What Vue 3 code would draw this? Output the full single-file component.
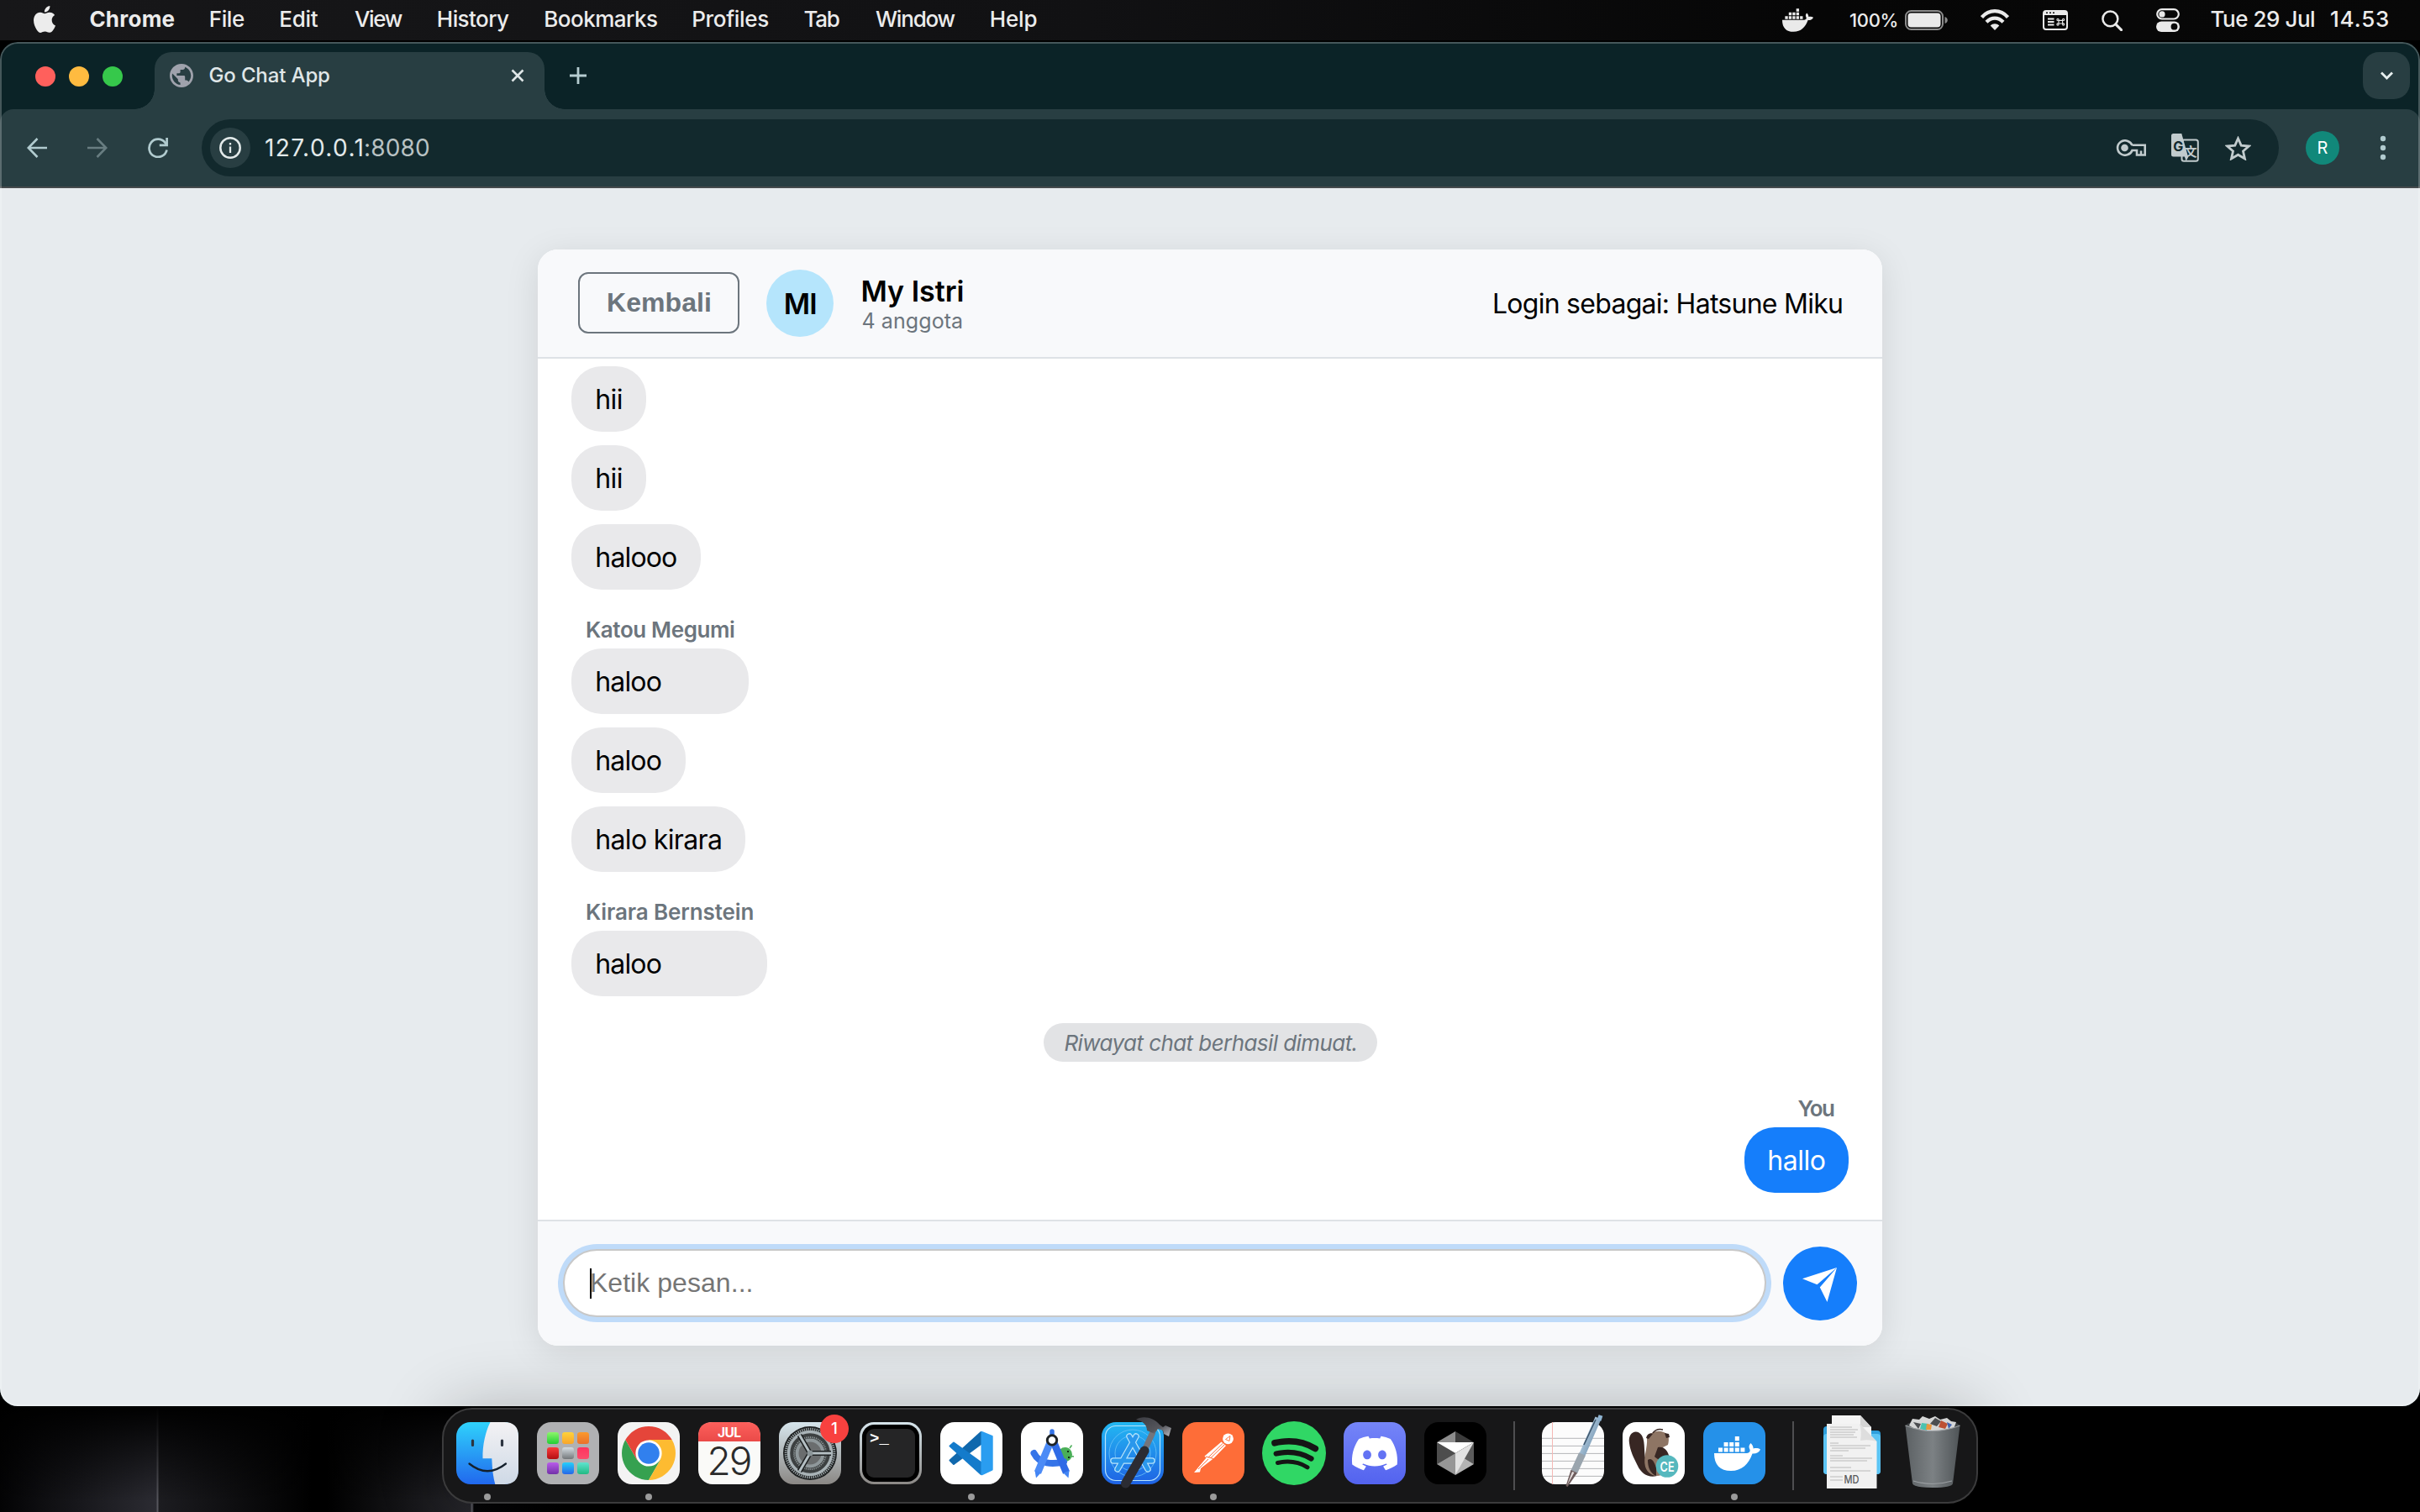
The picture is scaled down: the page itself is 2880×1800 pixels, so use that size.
<script setup>
const menus = [
  { label: 'File', w: 41 },
  { label: 'Edit', w: 45.4 },
  { label: 'View', w: 57.5 },
  { label: 'History', w: 85 },
  { label: 'Bookmarks', w: 133.5 },
  { label: 'Profiles', w: 90 },
  { label: 'Tab', w: 42 },
  { label: 'Window', w: 95.5 },
  { label: 'Help', w: 54.5 },
]

const messages = [
  { text: 'hii', w: 30.2 },
  { text: 'hii', w: 30.2 },
  { text: 'halooo', w: 95.6 },
  { name: 'Katou Megumi', nw: 177, text: 'haloo', w: 77.2 },
  { text: 'haloo', w: 77.2 },
  { text: 'halo kirara', w: 148.4 },
  { name: 'Kirara Bernstein', nw: 199.3, text: 'haloo', w: 77.2 },
]

const tiles = [
  ['#8df56b', '#22cf35'], ['#ffd23a', '#f8a52a'], ['#fb9a2c', '#ea702c'],
  ['#fb3b3b', '#b40f12'], ['#d5dde2', '#73777a'], ['#ff335f', '#fb4d6c'],
  ['#b95cea', '#7231a8'], ['#25d0fb', '#2767e8'], ['#5fe3cf', '#22ba83'],
]

const ctx = document.createElement('canvas').getContext('2d')

// Sizes a label to its visible ink: letter spacing stretches it to the given width.
const vFit = (el, { value }) => {
  const s = getComputedStyle(el)
  ctx.font = `${s.fontStyle} ${s.fontWeight} ${s.fontSize} ${s.fontFamily}`
  const text = el.textContent.trim()
  const m = ctx.measureText(text)
  const ink = m.actualBoundingBoxLeft + m.actualBoundingBoxRight
  el.style.letterSpacing = `${(value - 0.8 - ink) / Math.max(1, text.length - 1)}px`
  el.style.textIndent = `${m.actualBoundingBoxLeft + 0.9}px`
  el.style.width = `${value}px`
}
</script>

<template>
  <div class="desktop">
    <svg width="0" height="0" class="defs">
      <defs>
        <symbol id="whale" viewBox="0 0 55 41">
          <path d="M0 20h39c3-.5 4-2 3.600-4C41 13 41 10.500 43.500 8c2 2 3 4 3.200 6.500 3-.8 6-.5 8.300 1-1.500 3.500-5 5.300-9.500 5C41 33 33 41 20 41 7 41 0 34 0 20z" />
          <path d="M5 13.500h5v5H5zM11.600 13.500h5v5h-5zM18.200 13.500h5v5h-5zM24.800 13.500h5v5h-5zM31.400 13.500h5v5h-5zM11.600 6.900h5v5h-5zM18.200 6.900h5v5h-5zM24.800 6.900h5v5h-5zM24.800 0h5v5.200h-5z" />
        </symbol>
        <linearGradient id="gFinder" x2="0" y2="1"><stop stop-color="#2fd2fb" /><stop offset="1" stop-color="#2168ee" /></linearGradient>
        <linearGradient id="gFace" x2="0" y2="1"><stop stop-color="#f3f2f4" /><stop offset="1" stop-color="#ced9e6" /></linearGradient>
        <linearGradient id="gCal" x2="0" y2="1"><stop stop-color="#fd605c" /><stop offset="1" stop-color="#ea4a48" /></linearGradient>
        <linearGradient id="gSet" x2="0" y2="1"><stop stop-color="#d6e5ec" /><stop offset="1" stop-color="#8b8885" /></linearGradient>
        <linearGradient id="gXc" x2="0" y2="1"><stop stop-color="#22b8f2" /><stop offset="1" stop-color="#1f62e4" /></linearGradient>
        <linearGradient id="gDis" x2="0" y2="1"><stop stop-color="#7585f8" /><stop offset="1" stop-color="#5363ef" /></linearGradient>
        <linearGradient id="gPen" x2="1" y2="1"><stop stop-color="#cfe6f7" /><stop offset="1" stop-color="#5d7f9d" /></linearGradient>
        <linearGradient id="gBin"><stop stop-color="#5c6164" /><stop offset=".5" stop-color="#7c8184" /><stop offset="1" stop-color="#4f5457" /></linearGradient>
        <linearGradient id="gHam" x2="1" y2="1"><stop stop-color="#3b3c42" /><stop offset=".6" stop-color="#55565c" /><stop offset="1" stop-color="#b9bac0" /></linearGradient>
      </defs>
    </svg>

    <header class="menubar">
      <svg class="apple" viewBox="2.200 0 19.600 24"><path d="M12.152 6.896c-.948 0-2.415-1.078-3.960-1.040-2.040.027-3.910 1.183-4.961 3.014-2.117 3.675-.546 9.103 1.519 12.090 1.013 1.454 2.208 3.090 3.792 3.039 1.520-.065 2.090-.987 3.935-.987 1.831 0 2.350.987 3.960.948 1.637-.026 2.676-1.480 3.676-2.948 1.156-1.688 1.636-3.325 1.662-3.415-.039-.013-3.182-1.221-3.220-4.857-.026-3.040 2.480-4.494 2.597-4.559-1.429-2.090-3.623-2.324-4.390-2.376-2-.156-3.675 1.090-4.610 1.090zM15.530 3.830c.843-1.012 1.400-2.427 1.245-3.830-1.207.052-2.662.805-3.532 1.818-.780.896-1.454 2.338-1.273 3.714 1.338.104 2.715-.688 3.559-1.701" /></svg>
      <nav class="menus">
        <b v-fit="101" class="fit app-name">Chrome</b>
        <span v-for="m in menus" :key="m.label" v-fit="m.w" class="fit">{{ m.label }}</span>
      </nav>
      <div class="status">
        <svg class="st-docker"><use href="#whale" /></svg>
        <span v-fit="56.5" class="fit pct">100%</span>
        <svg class="st-batt" viewBox="0 0 51 24"><rect x="1" y="1" width="44" height="22" rx="6.500" fill="none" stroke="#8b8b8b" stroke-width="2" /><rect x="3.500" y="3.500" width="39" height="17" rx="4" /><path d="M47.500 8c2.500 1 3.300 2.500 3.300 4s-.8 3-3.300 4z" fill="#8b8b8b" /></svg>
        <svg class="st-wifi" viewBox="0 0 34 25" fill="none" stroke="#eaeaea" stroke-width="4.200"><path d="M1.500 9.500C10-.3 24-.3 32.500 9.500M7 15.300c6-6.300 14-6.300 20 0" /><path d="M17 25l-5.300-5.600c3.200-3 7.400-3 10.600 0z" fill="#eaeaea" stroke="none" /></svg>
        <svg class="st-win" viewBox="0 0 30 24" fill="none" stroke="#eaeaea" stroke-width="2"><rect x="1" y="1" width="28" height="22" rx="3" /><path d="M1 6h28V3q0-2-2-2H3Q1 1 1 3z" fill="#eaeaea" stroke="none" /><path d="M6 10.500h7.500M6 14h7.500M6 17.500h7.500" stroke-width="1.800" /><path d="M19 12.400h4.600v3.600H19z" stroke-width="1.100" /><circle cx="18" cy="11.400" r="1.100" stroke-width="1.100" /><circle cx="24.600" cy="11.400" r="1.100" stroke-width="1.100" /><circle cx="18" cy="17" r="1.100" stroke-width="1.100" /><circle cx="24.600" cy="17" r="1.100" stroke-width="1.100" /><path d="M4 3.300h2M8 3.300h2M12 3.300h2" stroke="#0b0b0c" stroke-width="1.600" /></svg>
        <svg class="st-search" viewBox="0 0 26 26" fill="none" stroke="#eaeaea" stroke-width="2.600"><circle cx="10.800" cy="10.800" r="9.300" /><path d="M17.500 17.500l7 7" stroke-width="3.200" stroke-linecap="round" /></svg>
        <svg class="st-cc" viewBox="0 0 28 28"><rect x="1.200" y="1.200" width="25.600" height="11.300" rx="5.650" fill="none" stroke="#eaeaea" stroke-width="2.200" /><circle cx="7" cy="6.900" r="3.600" /><rect y="15.500" width="28" height="12.500" rx="6.250" /><circle cx="21.500" cy="21.700" r="3.900" fill="#090909" /></svg>
        <span v-fit="123.500" class="fit date">Tue 29 Jul</span>
        <span v-fit="69" class="fit time">14.53</span>
      </div>
    </header>

    <section class="window">
      <div class="tabstrip">
        <div class="lights"><i class="red" /><i class="yellow" /><i class="green" /></div>
        <div class="tab">
          <svg class="globe" viewBox="2 2 20 20"><path d="M12 2C6.480 2 2 6.480 2 12s4.480 10 10 10 10-4.480 10-10S17.520 2 12 2zm-1 17.930c-3.950-.490-7-3.850-7-7.930 0-.620.080-1.210.210-1.790L9 15v1c0 1.100.900 2 2 2v1.930zm6.900-2.540c-.260-.810-1-1.390-1.900-1.390h-1v-3c0-.550-.450-1-1-1H8v-2h2c.550 0 1-.450 1-1V7h2c1.100 0 2-.900 2-2v-.410c2.930 1.190 5 4.060 5 7.410 0 2.080-.800 3.970-2.100 5.390z" /></svg>
          <span v-fit="143.500" class="fit tab-title">Go Chat App</span>
          <svg class="close" viewBox="0 0 16 16"><path d="M1.500 1.500l13 13M14.500 1.500l-13 13" stroke="#dfe6e7" stroke-width="2.600" /></svg>
        </div>
        <svg class="plus" viewBox="0 0 20 20"><path d="M10 0v20M0 10h20" stroke="#b6cdd1" stroke-width="2.800" /></svg>
        <div class="tabsearch"><svg viewBox="0 0 16 11"><path d="M1.500 1.500L8 8l6.500-6.500" fill="none" stroke="#e6eeee" stroke-width="2.800" /></svg></div>
      </div>

      <div class="toolbar">
        <svg class="nav" viewBox="0 0 24 24"><path d="M12.500 1L1.800 12l10.700 11M2 12h22" fill="none" stroke="#b1cbcf" stroke-width="2.600" /></svg>
        <svg class="nav fwd" viewBox="0 0 24 24"><path d="M11.500 1l10.700 11-10.700 11M22 12H0" fill="none" stroke="#687d81" stroke-width="2.600" /></svg>
        <svg class="nav reload" viewBox="0 0 24 24"><path d="M22.500 14.500A10.600 10.600 0 1 1 20.500 5.800L22.300 8.500" fill="none" stroke="#b1cbcf" stroke-width="2.700" /><path d="M22.600 0v8.800h-8.800" fill="none" stroke="#b1cbcf" stroke-width="2.700" /></svg>
        <div class="omnibox">
          <div class="info"><svg viewBox="0 0 26 26"><circle cx="13" cy="13" r="11.700" fill="none" stroke="#e3eaea" stroke-width="2.500" /><path d="M13 11.500V19M13 7v2.500" stroke="#e3eaea" stroke-width="2.300" /></svg></div>
          <div class="url"><span v-fit="115.500" class="fit">127.0.0.1</span><span v-fit="76" class="fit port">:8080</span></div>
          <svg class="key" viewBox="0 0 36 20" fill="none" stroke="#c1cbcd" stroke-width="2.600"><path d="M19.500 7A9 8.700 0 1 0 19.500 13H25v5.500h9.700V6.800H19.500" /><circle cx="10.500" cy="10" r="4.300" fill="#c1cbcd" stroke="none" /><path d="M30 18v-4.500" /></svg>
          <svg class="translate" viewBox="0 0 33 34"><rect x="12.500" y="7.500" width="19.300" height="25.300" rx="2.500" fill="none" stroke="#c1cbcd" stroke-width="2" /><path d="M2.500 0h9.800l7.700 27.500H2.500Q0 27.500 0 25V2.500Q0 0 2.500 0zM16 27.500h4.500L17.500 33z" fill="#c1cbcd" /><text x="2.300" y="20.500" class="tg">G</text><text x="15.600" y="26.500" class="tz">文</text></svg>
          <svg class="star" viewBox="0 0 31 29"><path d="M15.500 2.800l3.700 8.300 9.100.9-6.800 6 2 8.900-8-4.700-8 4.700 2-8.900-6.800-6 9.100-.9z" fill="none" stroke="#c1cbcd" stroke-width="2.800" /></svg>
        </div>
        <div class="profile">R</div>
        <svg class="dots" viewBox="0 0 8 30" fill="#b1cbcf"><circle cx="4" cy="4" r="3.200" /><circle cx="4" cy="15" r="3.200" /><circle cx="4" cy="26" r="3.200" /></svg>
      </div>

      <main class="page">
        <article class="card">
          <div class="chat-head">
            <button class="back"><span v-fit="121.600" class="fit">Kembali</span></button>
            <div class="avatar"><span v-fit="36.500" class="fit">MI</span></div>
            <div class="titles">
              <span v-fit="120" class="fit title">My Istri</span>
              <span v-fit="119.500" class="fit sub">4 anggota</span>
            </div>
            <span v-fit="415" class="fit login">Login sebagai: Hatsune Miku</span>
          </div>

          <div class="messages">
            <div v-for="(m, i) in messages" :key="i" class="msg">
              <div v-if="m.name" class="name"><span v-fit="m.nw" class="fit">{{ m.name }}</span></div>
              <div class="bubble"><span v-fit="m.w" class="fit">{{ m.text }}</span></div>
            </div>
            <div class="system"><span v-fit="347" class="fit">Riwayat chat berhasil dimuat.</span></div>
            <div class="msg own">
              <div class="name"><span v-fit="44.500" class="fit">You</span></div>
              <div class="bubble"><span v-fit="67.400" class="fit">hallo</span></div>
            </div>
          </div>

          <div class="composer">
            <div class="field"><i class="caret" /><span v-fit="190.500" class="fit">Ketik pesan...</span></div>
            <div class="send"><svg viewBox="0 0 41 41"><path d="M41 0L0 13.300l17.500 7zM41 0L20.800 23.600 29.500 41z" fill="#fff" /></svg></div>
          </div>
        </article>
      </main>
    </section>

    <footer class="dock-area">
      <div class="dock">
        <div class="app run"><svg viewBox="0 0 74 74">
          <rect width="74" height="74" rx="17" fill="url(#gFinder)" />
          <path d="M40.500 0H57q17 0 17 17v40q0 17-17 17H46.300Q43 63 42.300 43.300H31.500C31 27 35 11 40.500 0z" fill="url(#gFace)" />
          <path d="M19.500 22v5.500M54.500 22v5.500" stroke="#2c3440" stroke-width="3.200" stroke-linecap="round" /><path d="M15.500 49.500Q37 67 59 49.500" fill="none" stroke="#14202c" stroke-width="2.300" stroke-linecap="round" />
        </svg></div>

        <div class="app"><svg viewBox="0 0 74 74">
          <rect width="74" height="74" rx="17" fill="#b0b1b3" />
          <template v-for="(t, i) in tiles" :key="i">
            <linearGradient :id="'tile' + i" x2="0" y2="1"><stop :stop-color="t[0]" /><stop offset="1" :stop-color="t[1]" /></linearGradient>
            <rect :x="12 + (i % 3) * 18" :y="12 + Math.floor(i / 3) * 18" width="14" height="14" rx="3.200" :fill="`url(#tile${i})`" />
          </template>
        </svg></div>

        <div class="app run"><svg viewBox="0 0 74 74">
          <rect width="74" height="74" rx="17" fill="#f3f3f3" />
          <path d="M9.300 21A32 32 0 0 0 37 69L50.900 45 37 37 23.100 45z" fill="#36a150" />
          <path d="M64.700 21A32 32 0 0 1 37 69L50.900 45 37 37V21z" fill="#fdbb31" />
          <path d="M9.300 21A32 32 0 0 1 64.700 21H37V37L23.100 45z" fill="#e5453a" />
          <circle cx="37" cy="37" r="15.600" fill="#fff" /><circle cx="37" cy="37" r="12.800" fill="#3180ee" />
        </svg></div>

        <div class="app"><svg viewBox="0 0 74 74">
          <rect width="74" height="74" rx="17" fill="#fafaf8" /><path d="M0 23V17Q0 0 17 0h40q17 0 17 17v6z" fill="url(#gCal)" />
          <text x="23" y="17.700" class="cal-m" textLength="28">JUL</text><text x="10.500" y="62.700" class="cal-d" textLength="54">29</text>
        </svg></div>

        <div class="app"><svg viewBox="0 0 74 74">
          <rect width="74" height="74" rx="17" fill="url(#gSet)" />
          <circle cx="37" cy="37" r="32" fill="#1c1f20" /><circle cx="37" cy="37" r="28.800" fill="none" stroke="#98a1a4" stroke-width="3" stroke-dasharray="1.300 1.210" />
          <circle cx="37" cy="37" r="25.500" fill="#3c4041" stroke="#a9b3b7" stroke-width="3.400" />
          <circle cx="37" cy="37" r="19" fill="none" stroke="#8b9395" stroke-width="2" stroke-dasharray="1.300 1.100" />
          <circle cx="37" cy="37" r="15.500" fill="#6a6d6e" stroke="#8f989b" stroke-width="4" />
          <path d="M37 37h25M37 37L24.500 15.500M37 37L24.500 58.500" stroke="#1c1f20" stroke-width="6" /><path d="M37 37h25M37 37L24.500 15.500M37 37L24.500 58.500" stroke="#b4bfc3" stroke-width="3" /><circle cx="37" cy="37" r="3.500" fill="#8c9699" />
        </svg><b class="badge">1</b></div>

        <div class="app"><svg viewBox="0 0 74 74">
          <rect width="74" height="74" rx="17" fill="url(#gSet)" /><rect x="3" y="3" width="68" height="68" rx="14.500" fill="#000" /><rect x="8" y="8" width="58" height="58" rx="9" fill="#252526" />
          <text x="12" y="25" class="term">&gt;_</text>
        </svg></div>

        <div class="app run"><svg viewBox="0 0 74 74">
          <rect width="74" height="74" rx="17" fill="#fff" />
          <g stroke-linejoin="round" stroke-width="2"><path d="M48.500 12L11.500 45.500l4.500 4.500L48.500 26z" fill="#1068ad" stroke="#1068ad" /><path d="M11.500 28.500l4.500-4L48.500 48v14z" fill="#147bcb" stroke="#147bcb" /><path d="M49.500 12L61.700 17v39.500L49.500 62.300z" fill="#2a9df0" stroke="#2a9df0" /></g>
        </svg></div>

        <div class="app"><svg viewBox="0 0 74 74">
          <rect width="74" height="74" rx="17" fill="#fff" />
          <circle cx="52.500" cy="38.500" r="8.500" fill="#4aaf58" /><path d="M58 31l2.500-3.500M59 40.500l4 .5" stroke="#4aaf58" stroke-width="1.500" /><circle cx="56" cy="35" r="1" /><circle cx="57" cy="42" r="1" />
          <path d="M15.500 37C22 50 38 51 51 47" fill="none" stroke="#3574e8" stroke-width="8" stroke-linecap="round" />
          <path d="M39.500 25L54 60" stroke="#2f6be6" stroke-width="8.500" /><path d="M34.500 25L20 60" stroke="#4c8bf6" stroke-width="8.500" /><path d="M16.500 57.500l7 3L18 66.500zM57.500 57.500l-7 3 6 6z" fill="#4285f4" />
          <path d="M37 11v8" stroke="#3574e8" stroke-width="5.500" stroke-linecap="round" /><circle cx="37" cy="21.500" r="5.700" fill="#fff" stroke="#1e2326" stroke-width="3" />
        </svg></div>

        <div class="app"><svg viewBox="0 0 74 74">
          <rect width="74" height="74" rx="17" fill="url(#gXc)" /><rect x="4.500" y="4.500" width="65" height="65" rx="12.500" fill="none" stroke="#b8e4fb" stroke-width="1.200" /><circle cx="37" cy="37" r="28" fill="none" stroke="#6cc3f6" stroke-width=".8" /><circle cx="37" cy="37" r="21" fill="none" stroke="#6cc3f6" stroke-width=".8" />
          <g stroke-linecap="round" fill="none"><path d="M33 17L55 56M41 17L19 56M14 46h46" stroke="#b8e4fb" stroke-width="7.500" /><path d="M33 17L55 56M41 17L19 56M14 46h46" stroke="#2a97ec" stroke-width="5" /></g>
          <path d="M61 12L49 38" stroke="#73757c" stroke-width="7" /><path d="M51 34L28.500 73" stroke="#2b2c33" stroke-width="11" stroke-linecap="round" />
          <path d="M41-3C48-8 62-6 69 3l4 3 3-2 7 3-3 10-6-3-1-4-6-2-4 6-9-4C54 4 50-1 41-3z" fill="url(#gHam)" />
        </svg></div>

        <div class="app run"><svg viewBox="0 0 74 74">
          <rect width="74" height="74" rx="17" fill="#fe6d38" />
          <circle cx="54.500" cy="19.800" r="6.400" fill="#fff" /><path d="M51.500 20.500l5.500-4-1 6z" fill="none" stroke="#fe6d38" stroke-width=".9" />
          <path d="M46.500 23.500l5.500 4.500L37.500 43 22 55l-1 4.500-7 .5 5-6 9.500-11.500-2-2z" fill="#fff" /><path d="M48.500 25L31 42M28 41l9 2.500M50.500 26.500L34 42.500M31 44l-12 12" stroke="#fe6d38" stroke-width="1" />
        </svg></div>

        <div class="app"><svg viewBox="0 0 74 74">
          <circle cx="37" cy="37" r="38" fill="#30d765" />
          <g fill="none" stroke="#151515" stroke-linecap="round"><path d="M14 24.800Q41 18.500 62.300 31.500" stroke-width="7.600" /><path d="M15.700 37.500Q39 32.500 57.500 43.500" stroke-width="6.200" /><path d="M17.500 48.500Q37 44 53 53.800" stroke-width="5" /></g>
        </svg></div>

        <div class="app"><svg viewBox="0 0 74 74">
          <rect width="74" height="74" rx="17" fill="url(#gDis)" />
          <path transform="translate(10 10.300) scale(2.250 2.220)" fill="#fff" d="M20.317 4.370a19.791 19.791 0 00-4.885-1.515.074.074 0 00-.079.037c-.211.375-.445.865-.608 1.250-1.845-.276-3.680-.276-5.487 0-.164-.393-.406-.874-.618-1.250a.077.077 0 00-.079-.037 19.736 19.736 0 00-4.885 1.515.070.070 0 00-.032.028C.533 9.046-.319 13.580.099 18.058a.082.082 0 00.031.056c2.053 1.508 4.041 2.423 5.993 3.029a.078.078 0 00.084-.028c.462-.630.873-1.295 1.226-1.994a.076.076 0 00-.042-.106c-.653-.248-1.274-.550-1.872-.892a.077.077 0 01-.008-.128c.126-.094.252-.192.372-.291a.074.074 0 01.078-.011c3.928 1.793 8.180 1.793 12.061 0a.074.074 0 01.079.010c.120.099.246.198.373.292a.077.077 0 01-.007.128 12.299 12.299 0 01-1.873.891.077.077 0 00-.041.107c.360.698.772 1.363 1.225 1.993a.076.076 0 00.084.029c1.961-.607 3.950-1.522 6.002-3.029a.077.077 0 00.031-.055c.500-5.177-.838-9.674-3.549-13.660a.061.061 0 00-.031-.029zM8.020 15.331c-1.183 0-2.157-1.086-2.157-2.419 0-1.333.956-2.419 2.157-2.419 1.211 0 2.176 1.095 2.157 2.419 0 1.333-.956 2.419-2.157 2.419zm7.975 0c-1.183 0-2.157-1.086-2.157-2.419 0-1.333.955-2.419 2.157-2.419 1.211 0 2.176 1.095 2.157 2.419 0 1.333-.946 2.419-2.157 2.419z" />
        </svg></div>

        <div class="app"><svg viewBox="0 0 74 74">
          <rect width="74" height="74" rx="17" fill="#000" />
          <path d="M37 11L15 24h22z" fill="#8d8d8d" /><path d="M37 11l22 13H37z" fill="#3c3c3c" /><path d="M15 24v26l22-13z" fill="#4d4d4d" /><path d="M15 50l22 13V37z" fill="#979797" /><path d="M59 24v26L46 42z" fill="#5b5b5b" /><path d="M59 50L37 63l9-21z" fill="#b4b4b4" /><path d="M15 24h44L37 37z" fill="#fff" /><path d="M59 24L37 63V37z" fill="#e2e2e2" />
        </svg></div>

        <div class="sep"><i /></div>

        <div class="app"><svg viewBox="0 0 74 74">
          <rect width="74" height="74" rx="16" fill="#fcfcfc" /><path d="M0 19.300h74M0 28.400h74M0 37.400h74M0 46.400h74M0 55.400h74M2 64.400h70" stroke="#b5b6b8" stroke-width="1" /><path d="M12.500 0v74" stroke="#f5b8b4" stroke-width="1" />
          <path d="M67-5L47 41" stroke="url(#gPen)" stroke-width="7.500" /><path d="M70-8l-2 6" stroke="#8fb4d2" stroke-width="5" /><path d="M64-3L50 27" stroke="#3e566c" stroke-width="1.600" /><path d="M48 38L38 60" stroke="#9aa5ae" stroke-width="8.500" /><path d="M34.500 57l7.500 3.500L30.500 77l-2-1z" fill="#6d5c5c" /><path d="M36 59l2.500 1L30 75z" fill="#e6e0e0" />
        </svg></div>

        <div class="app"><svg viewBox="0 0 74 74">
          <rect width="74" height="74" rx="16" fill="#fff" />
          <path d="M8 25C6 12 17 7 23 16c5 9 1 22 6 33 3 8 7 13 12 15-10 3-19-3-23-12C13 42 9 34 8 25z" fill="#382723" />
          <path d="M29 19c4-7 12-10 20-7 6 2 7 8 5 15l-6 3 7 13-9 20c-8 3-16-1-19-10-3-11 3-22 2-34z" fill="#8e7564" />
          <path d="M28 19c1-5 5-7 8-5l-5 6zM50 13l5 1 1 4-4 1zM42 30c8-2 14 6 14 16l-9 9c1-10-7-11-9-14zM40 54c-3-9-6-12-10-9 0 9 3 16 10 19z" fill="#382723" /><path d="M36 13c3-4 8-5 12-4" fill="none" stroke="#382723" stroke-width="1.500" />
          <circle cx="53" cy="52.500" r="13.300" fill="#56b8be" /><text x="44.600" y="58.500" class="ce" textLength="17" lengthAdjust="spacingAndGlyphs">CE</text>
        </svg></div>

        <div class="app run"><svg viewBox="0 0 74 74"><rect width="74" height="74" rx="16" fill="#2591e9" /><use href="#whale" x="13" y="17" width="55" height="41" fill="#fff" /></svg></div>

        <div class="sep"><i /></div>

        <div class="app"><svg viewBox="0 0 74 74">
          <path d="M3 9q0-4 4-4h20l5 5h35q4 0 4 4v44q0 4-4 4H7q-4 0-4-4z" fill="#2f9fdc" /><rect x="3" y="14" width="68" height="48" rx="4" fill="#5cc4f4" />
          <path d="M13-8h34l13 14v20H13z" fill="#f4f4f4" /><path d="M47-8v14h13z" fill="#d4d4d4" /><path d="M7 2h39l20.500 21v56H7z" fill="#f1f1f1" /><path d="M46 2q3 9 1 20 10-2 19.500 1z" fill="#dedede" />
          <path d="M11 6h26M11 9h33M11 12h30M11 15h28M11 18h32M11 25h10M11 28h48M13 31h40M11 34h22M11 40h15M11 43h50M11 46h44M11 54h25M11 58h48M11 65h15M11 69h15" stroke="#b4b4b4" stroke-width=".9" />
          <text x="27.500" y="73.300" class="md" textLength="18" lengthAdjust="spacingAndGlyphs">MD</text>
        </svg></div>

        <div class="app"><svg viewBox="0 0 74 74">
          <ellipse cx="37" cy="4" rx="32" ry="6" fill="#3a3e40" />
          <path d="M9 4l4-8 8 1 4-4 8 3 7-3 6 4 8-2 5 4 6 1-3 8-12 4H22z" fill="#d5d6d6" /><path d="M14 0l9 2-3 6zM40-5l7 4-5 6-8-3z" fill="#4b4d50" /><path d="M24 1l8 1-2 8-8-2z" fill="#49c2b0" /><path d="M47-2l8 4-3 6-8-2z" fill="#bd5134" /><path d="M30 2l6 1-1 6-6 0z" fill="#e9973e" /><path d="M54 0l6 3-4 5z" fill="#3e62b0" />
          <path d="M4.500 4Q37 17 69.500 4L61 73q-1 5-24 5t-24-5z" fill="url(#gBin)" /><path d="M4.500 4Q37 17 69.500 4M14 70q23 7 46 0" fill="none" stroke="#9a9ea1" stroke-width="1.200" />
        </svg></div>
      </div>
    </footer>
  </div>
</template>

<style>
body { background: #000; overflow: hidden; }
</style>

<style scoped>
.desktop { width: 2880px; height: 1800px; display: flex; flex-direction: column; background: #000; font-family: Inter, "Noto Sans", sans-serif; overflow: hidden; position: relative; }
.defs { position: absolute; }
.fit { display: block; white-space: nowrap; flex: none; }
svg { display: block; flex: none; }

.menubar { height: 48px; flex: none; box-sizing: border-box; padding: 0 38px 2px 40px; display: flex; align-items: center; background: linear-gradient(90deg, #171719, #111113 45%, #060606 75%, #080808); color: #ececec; font-size: 26px; line-height: 46px; font-weight: 500; }
.apple { width: 26px; height: 32px; fill: #ececec; margin-top: -1px; }
.menus { display: flex; gap: 42.4px; margin-left: 40.5px; }
.app-name { font-weight: 700; }
.status { margin-left: auto; display: flex; align-items: center; fill: #eaeaea; }
.st-docker { width: 37px; height: 28px; margin-top: 2px; }
.pct { font-size: 22px; margin: 2px 0 0 43px; }
.st-batt { width: 51px; height: 24px; margin: 2px 0 0 9.5px; }
.st-wifi { width: 34px; height: 25px; margin: 1px 0 0 39px; }
.st-win { width: 30px; height: 24px; margin: 2px 0 0 40px; }
.st-search { width: 25px; height: 25px; margin: 2px 0 0 40px; }
.st-cc { width: 28px; height: 28px; margin: 1px 0 0 40px; }
.date { margin-left: 36.5px; }
.time { margin-left: 19px; }

.window { margin-top: 2px; height: 1624px; flex: none; border-radius: 21px; overflow: hidden; position: relative; display: flex; flex-direction: column; background: #0b2327; }
.window::after { content: ""; position: absolute; inset: 0; border-radius: 21px; border: 2px solid rgba(255, 255, 255, .24); pointer-events: none; }
.tabstrip { height: 80px; flex: none; display: flex; align-items: center; padding: 12px 12px 0 42px; box-sizing: border-box; }
.lights { display: flex; gap: 16px; margin-top: -10px; }
.lights i { width: 24px; height: 24px; border-radius: 50%; }
.red { background: #ff605c; }
.yellow { background: #ffbb40; }
.green { background: #36c84b; }
.tab { position: relative; width: 464px; height: 68px; margin-left: 38px; box-sizing: border-box; padding: 0 24px 12px 18px; display: flex; align-items: center; background: #283e42; border-radius: 20px 20px 0 0; }
.tab::before, .tab::after { content: ""; position: absolute; bottom: 0; width: 24px; height: 24px; }
.tab::before { left: -24px; background: radial-gradient(circle at 0 0, transparent 23.500px, #283e42 24px); }
.tab::after { right: -24px; background: radial-gradient(circle at 100% 0, transparent 23.500px, #283e42 24px); }
.globe { width: 28px; height: 28px; fill: #9fa2ac; }
.tab-title { margin-left: 18.500px; color: #e0e7e8; font-size: 24px; line-height: 30px; font-weight: 500; }
.close { width: 16px; height: 16px; margin-left: auto; }
.plus { width: 20px; height: 20px; margin: -12px 0 0 30px; }
.tabsearch { margin: -12px 0 0 auto; width: 56px; height: 56px; border-radius: 19px; background: #283e42; display: flex; align-items: center; justify-content: center; }
.tabsearch svg { width: 17px; height: 11px; }

.toolbar { height: 94px; flex: none; box-sizing: border-box; border-bottom: 2px solid #454a4c; background: #283e42; border-radius: 16px 16px 0 0; display: flex; align-items: center; padding: 0 40px 0 32px; }
.nav { width: 24px; height: 24px; }
.fwd, .reload { margin-left: 48px; }
.omnibox { margin-left: 40px; width: 2472px; height: 68px; box-sizing: border-box; border-radius: 34px; background: #12292d; display: flex; align-items: center; padding: 0 33px 0 10px; }
.info { width: 48px; height: 48px; border-radius: 50%; background: #283e42; display: flex; align-items: center; justify-content: center; }
.info svg { width: 26px; height: 26px; }
.url { display: flex; gap: 3.500px; margin-left: 17px; font-size: 28px; line-height: 68px; color: #e3eaea; }
.port { color: #b8c2c3; }
.key { width: 36px; height: 20px; margin-left: auto; }
.translate { width: 33px; height: 34px; margin-left: 30px; }
.tg { font: 700 16px Inter, sans-serif; fill: #12292d; }
.tz { font: 700 15px "Noto Sans CJK SC", sans-serif; fill: #c1cbcd; }
.star { width: 31px; height: 29px; margin-left: 31px; }
.profile { margin-left: 32px; width: 40px; height: 40px; border-radius: 50%; background: #11887a; color: #fff; font-size: 20px; line-height: 40px; text-align: center; }
.dots { width: 8px; height: 30px; margin-left: auto; }

.page { flex: 1; background: #e7ebee; padding: 73px 640px 72px; display: flex; }
.card { flex: 1; display: flex; flex-direction: column; background: #fff; border-radius: 24px; overflow: hidden; box-shadow: 0 8px 40px rgba(0, 0, 0, .1); color: #000; }
.chat-head { height: 130px; flex: none; box-sizing: border-box; border-bottom: 2px solid #dee2e6; background: #f8f9fb; display: flex; align-items: center; padding: 0 48px; }
.back { width: 192px; height: 73px; margin-top: -1px; box-sizing: border-box; padding: 0 0 1px; border: 2px solid #6c757d; border-radius: 12px; background: transparent; color: #6c757d; font: 700 32px/36px "Liberation Sans", Arial, sans-serif; display: flex; align-items: center; justify-content: center; text-align: left; }
.avatar { width: 80px; height: 80px; margin-left: 32px; border-radius: 50%; background: #b5e5fc; display: flex; align-items: center; justify-content: center; font-size: 34px; font-weight: 600; }
.titles { margin-left: 33.500px; padding-top: 3px; }
.title { font-size: 34px; line-height: 40px; font-weight: 600; }
.sub { font-size: 25px; line-height: 31px; color: #6c757d; }
.login { margin-left: auto; font-size: 32px; }
.messages { flex: 1; padding: 9px 40px 32px; display: flex; flex-direction: column; align-items: flex-start; gap: 16px; }
.msg { display: flex; flex-direction: column; }
.name { padding: 16px 17px 6px; font-size: 26px; line-height: 32px; font-weight: 600; color: #6c757d; }
.bubble { height: 78px; box-sizing: border-box; padding: 1px 29.400px 0; border-radius: 36px; background: #e9e9eb; font-size: 32px; line-height: 78px; }
.system { align-self: center; margin: 16px 0 8px; padding: 0 25px; height: 46px; border-radius: 24px; background: #e2e3e5; color: #6c757d; font-size: 26px; line-height: 48px; font-style: italic; }
.own { align-self: flex-end; align-items: flex-end; }
.own .bubble { background: #157efb; color: #fff; padding: 1px 28.300px 0; }
.composer { height: 150px; flex: none; box-sizing: border-box; border-top: 2px solid #dee2e6; background: #f8f9fb; display: flex; align-items: center; gap: 20px; padding: 0 30px; }
.field { flex: 1; height: 81px; margin-top: -1px; box-sizing: border-box; border: 2px solid #c8c8c8; border-radius: 41px; background: #fff; box-shadow: 0 0 0 6px #bfdbf9; display: flex; align-items: center; padding-left: 30px; font: 32px/77px "Liberation Sans", Arial, sans-serif; color: #757575; }
.caret { width: 2px; height: 36px; background: #000; margin-right: -1px; }
.send { width: 88px; height: 88px; border-radius: 50%; background: #157efb; display: flex; align-items: center; justify-content: center; }
.send svg { width: 41px; height: 41px; margin: 2px 2px 0 0; }

.dock-area { flex: 1; padding-top: 2px; display: flex; justify-content: center; align-items: flex-start; background:
  linear-gradient(180deg, #000, transparent 90%),
  linear-gradient(90deg, #030304, #2b2b32 186px, #55555c 187px, #55555c 188px, #1c1c20 189px, #000 370px, #000 390px, #26262b 560px, #55555c 561px, #55555c 562px, #050506 564px, #000 700px, #000); }
.dock { position: relative; width: 1828px; height: 114px; box-sizing: border-box; border: 2px solid #3b3b3c; border-radius: 36px; background: #171718; box-shadow: 0 0 80px rgba(0, 0, 0, .24); display: flex; gap: 22px; padding: 15px; }
.app { position: relative; width: 74px; height: 74px; flex: none; }
.app svg { width: 74px; height: 74px; overflow: visible; }
.run::after { content: ""; position: absolute; left: 33px; top: 85px; width: 8px; height: 8px; border-radius: 50%; background: #9b9b9b; }
.sep { width: 22px; flex: none; display: flex; justify-content: center; }
.sep i { width: 2px; height: 82px; margin-top: -1px; background: #4e4e50; }
.badge { position: absolute; left: 49px; top: -9px; width: 34px; height: 34px; border-radius: 50%; background: #f8413f; color: #fff; font-size: 19px; line-height: 34px; font-weight: 500; text-align: center; }
.cal-m { font: 700 15.500px Inter, sans-serif; fill: #fff; }
.cal-d { font: 300 46px Inter, sans-serif; fill: #2b2b2b; }
.term { font: 700 19px "Liberation Mono", monospace; fill: #fff; }
.ce { font: 600 16px Inter, sans-serif; fill: #fff; }
.md { font: 500 13px Inter, sans-serif; fill: #58595b; }
</style>
